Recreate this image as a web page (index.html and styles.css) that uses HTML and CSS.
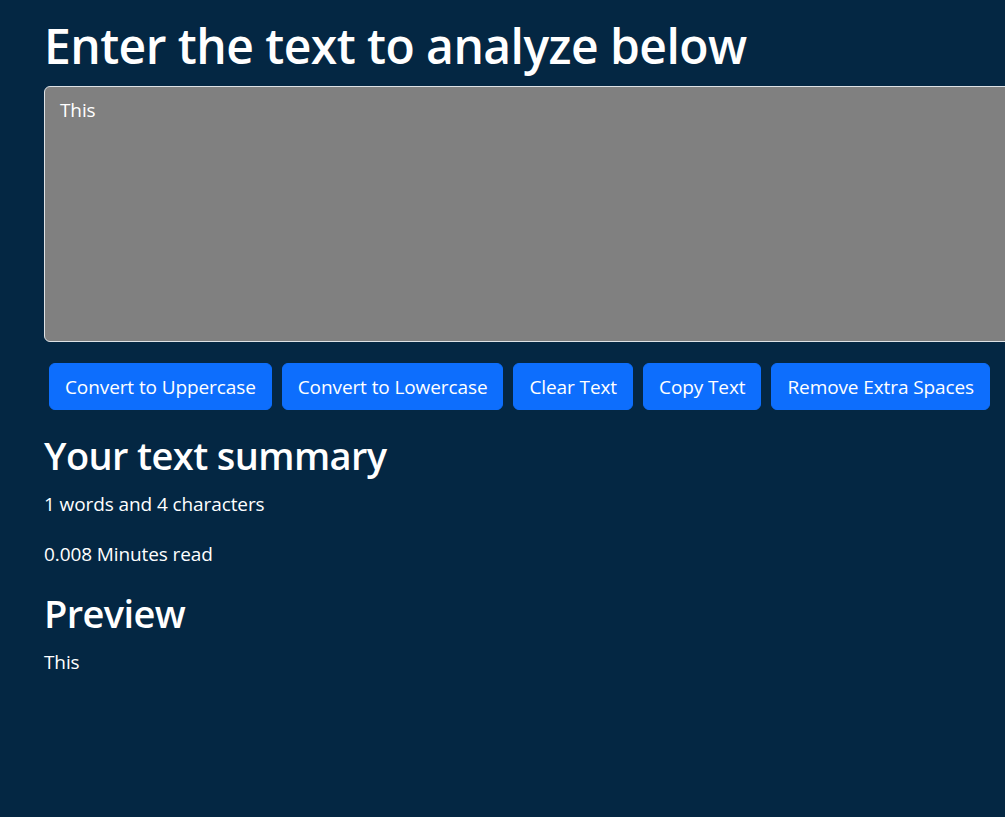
FILE: index.html
```html
<!DOCTYPE html>
<html lang="en">
<head>
<meta charset="utf-8">
<title>TextUtils</title>
<link rel="stylesheet" href="styles.css">
</head>
<body>
<main class="page">
  <section class="editor">
    <h1 class="title">Enter the text to analyze below</h1>
    <textarea class="input" rows="8">This</textarea>
    <div class="actions">
      <button class="btn">Convert to Uppercase</button>
      <button class="btn">Convert to Lowercase</button>
      <button class="btn">Clear Text</button>
      <button class="btn">Copy Text</button>
      <button class="btn">Remove Extra Spaces</button>
    </div>
  </section>
  <section class="summary">
    <h2 class="heading">Your text summary</h2>
    <p class="text">1 words and 4 characters</p>
    <p class="text">0.008 Minutes read</p>
    <h2 class="heading">Preview</h2>
    <p class="text">This</p>
  </section>
</main>
</body>
</html>
```
FILE: styles.css
```css
html, body {
  margin: 0;
  padding: 0;
  overflow: hidden;
}
body {
  background: #042743;
  color: #ffffff;
  font-family: "Open Sans", "Noto Sans", sans-serif;
  font-size: 19px;
  letter-spacing: -0.1px;
  line-height: 30px;
  width: 1005px;
  height: 817px;
}
.page {
  padding: 16px 0 0 44px;
}
.title {
  margin: 0 0 10px;
  font-size: 48px;
  letter-spacing: -0.55px;
  line-height: 60px;
  font-weight: 600;
}
.input {
  display: block;
  box-sizing: border-box;
  width: 1000px;
  height: 256px;
  margin: 0;
  padding: 7.5px 15px;
  border: 1px solid #dee2e6;
  border-radius: 6px;
  background: #808080;
  color: #ffffff;
  font-family: inherit;
  font-size: 19px;
  letter-spacing: -0.1px;
  line-height: 30px;
  resize: none;
  outline: none;
}
.actions {
  display: flex;
  gap: 10px;
  margin: 21px 0 0 5px;
}
.btn {
  flex: none;
  box-sizing: border-box;
  height: 47px;
  padding: 7.5px 15px;
  border: 1px solid #0d6efd;
  border-radius: 6px;
  background: #0d6efd;
  color: #ffffff;
  font-family: inherit;
  font-size: 19px;
  letter-spacing: -0.1px;
  line-height: 30px;
  white-space: nowrap;
  cursor: pointer;
}
.summary {
  margin-top: 21px;
}
.heading {
  margin: 0 0 10px;
  font-size: 38px;
  letter-spacing: -0.6px;
  line-height: 48px;
  font-weight: 600;
}
.text {
  margin: 0 0 20px;
}
```
